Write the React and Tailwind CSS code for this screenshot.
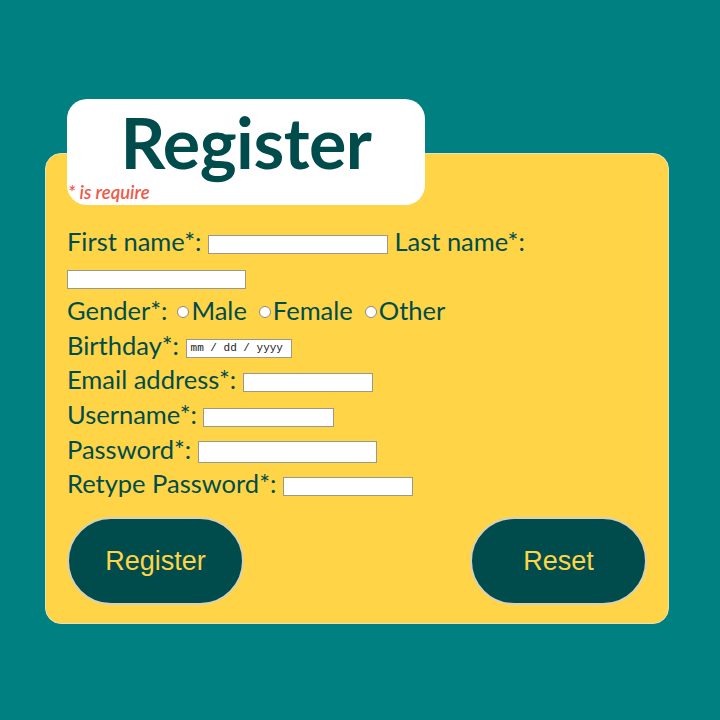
import React from 'react';

const Field = ({ w, h = 'h-[19px]' }) => (
  <input
    type="text"
    className={`${w} ${h} inline-block align-middle bg-white border border-[#9a9a8a] outline-none`}
  />
);

const Radio = ({ label, last }) => (
  <label className={`inline-flex items-center ${last ? '' : 'mr-[12px]'}`}>
    <span className="inline-block w-[12px] h-[12px] rounded-full bg-white border border-[#8a8a8a] mr-[2px] mt-[4px]" />
    {label}
  </label>
);

const App = () => {
  return (
    <div className="w-[720px] h-[720px] bg-[#008080] pt-[99px] pl-[45px]" style={{ fontFamily: 'Lato, "Noto Sans", sans-serif' }}>
      <div className="w-[624px]">
        <div className="relative z-10 ml-[22px] w-[358px] h-[106px] bg-white rounded-[20px] flex flex-col">
          <h1 className="text-center text-[70px] leading-none font-bold text-[#004c4c] pt-[8px] tracking-[-0.5px]">
            Register
          </h1>
          <p className="mt-auto mb-[4px] ml-[1px] text-[18.5px] italic font-semibold text-[#f05a4a] leading-none">* is require</p>
        </div>

        <div className="-mt-[52px] bg-[#ffd447] border border-[#e8e0c0] rounded-[16px] pt-[70px] px-[21px] pb-[18px] text-[#004c4c] text-[25.5px] leading-[34.6px]">
          <div>
            First name*: <Field w="w-[180px]" /> Last name*: <Field w="w-[179px]" />
          </div>
          <div className="flex items-center">
            Gender*:<span className="w-[10px]" /><Radio label="Male" /><Radio label="Female" /><Radio label="Other" last />
          </div>
          <div>
            Birthday*:{' '}
            <span className="inline-flex items-center align-middle w-[106px] h-[19px] bg-white border border-[#9a9a8a] pl-[4px] text-[11px] leading-none text-[#222]" style={{ fontFamily: '"Liberation Mono", monospace' }}>
              mm / dd / yyyy
            </span>
          </div>
          <div>
            Email address*: <Field w="w-[130px]" />
          </div>
          <div>
            Username*: <Field w="w-[131px]" />
          </div>
          <div>
            Password*: <Field w="w-[179px]" h="h-[22px]" />
          </div>
          <div>
            Retype Password*: <Field w="w-[130px]" />
          </div>

          <div className="flex justify-between mt-[16px]">
            <button className="w-[177px] h-[88px] rounded-full bg-[#004c4c] border-2 border-[#d8d0b8] text-[#ffd447] text-[27px] pt-[2px]" style={{ fontFamily: '"Liberation Sans", Arial, sans-serif' }}>
              Register
            </button>
            <button className="w-[177px] h-[88px] rounded-full bg-[#004c4c] border-2 border-[#d8d0b8] text-[#ffd447] text-[27px] pt-[2px]" style={{ fontFamily: '"Liberation Sans", Arial, sans-serif' }}>
              Reset
            </button>
          </div>
        </div>
      </div>
    </div>
  );
};

export default App;
